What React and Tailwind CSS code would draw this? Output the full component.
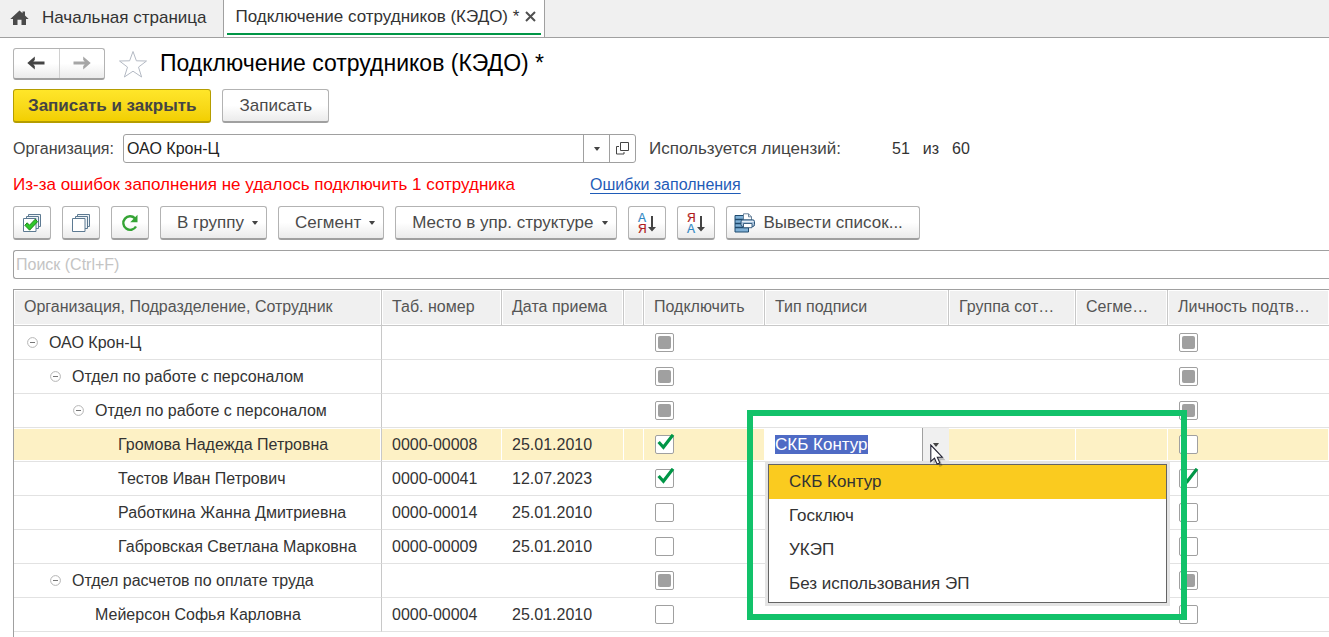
import { useState } from "react";

const COLUMNS = [
  { id: "name", title: "Организация, Подразделение, Сотрудник", width: "w-[368px]" },
  { id: "number", title: "Таб. номер", width: "w-[120px]" },
  { id: "date", title: "Дата приема", width: "w-[122px]" },
  { id: "mark", title: "", width: "w-[20px]" },
  { id: "connect", title: "Подключить", width: "w-[121px]" },
  { id: "sign", title: "Тип подписи", width: "w-[184px]" },
  { id: "group", title: "Группа сот…", width: "w-[127px]" },
  { id: "segment", title: "Сегме…", width: "w-[92px]" },
  { id: "identity", title: "Личность подтв…", width: "w-auto" },
];

const ROWS = [
  { name: "ОАО Крон-Ц", level: 0, group: true, connect: "mixed", identity: "mixed" },
  { name: "Отдел по работе с персоналом", level: 1, group: true, connect: "mixed", identity: "mixed" },
  { name: "Отдел по работе с персоналом", level: 2, group: true, connect: "mixed", identity: "mixed" },
  { name: "Громова Надежда Петровна", level: 3, number: "0000-00008", date: "25.01.2010", connect: "on", identity: "off", selected: true },
  { name: "Тестов Иван Петрович", level: 3, number: "0000-00041", date: "12.07.2023", connect: "on", identity: "on" },
  { name: "Работкина Жанна Дмитриевна", level: 3, number: "0000-00014", date: "25.01.2010", connect: "off", identity: "off" },
  { name: "Габровская Светлана Марковна", level: 3, number: "0000-00009", date: "25.01.2010", connect: "off", identity: "off" },
  { name: "Отдел расчетов по оплате труда", level: 1, group: true, connect: "mixed", identity: "mixed" },
  { name: "Мейерсон Софья Карловна", level: 2, number: "0000-00004", date: "25.01.2010", connect: "off", identity: "off" },
];

const INDENTS = ["pl-[13px]", "pl-[36px]", "pl-[59px]", "pl-[82px]"];

const SIGN_TYPES = ["СКБ Контур", "Госключ", "УКЭП", "Без использования ЭП"];

const BUTTON =
  "flex h-[34px] items-center rounded-[3px] border border-[#b3b3b3] border-b-2 border-b-[#a0a0a0] bg-linear-to-b from-white from-50% to-[#ebebeb] text-[17px] whitespace-nowrap text-[#4a4a4a]";

function HomeIcon() {
  return (
    <svg width="19" height="16" viewBox="0 0 19 16" fill="#4a4a4a" aria-hidden="true">
      <path d="M9.500 .5 12.500 3.300V1.500h2.500v4.100L18.700 9H16v6h-4.500V9.800h-4V15H3V9H.3z" />
    </svg>
  );
}

function ArrowIcon({ className }) {
  return (
    <svg width="18" height="14" viewBox="0 0 18 14" fill="currentColor" className={className} aria-hidden="true">
      <path d="M.3 7 7.800.6V4L6.300 5.500H17.500v3H6.300L7.800 10v3.400z" />
    </svg>
  );
}

function StarIcon() {
  return (
    <svg width="30" height="28" viewBox="0 0 30 28" fill="none" stroke="#b4bac4" aria-hidden="true">
      <path d="M15 1.500 18.400 10.800 28.500 11 20.500 17.100 23.600 27 15 21.200 6.400 27 9.500 17.100 1.500 11 11.600 10.800z" />
    </svg>
  );
}

function Caret() {
  return (
    <svg width="6" height="4" viewBox="0 0 6 4" fill="#444" className="shrink-0" aria-hidden="true">
      <path d="M0 0h6L3.500 3.500h-1z" />
    </svg>
  );
}

function StackIcon({ checked }) {
  return (
    <svg width="20" height="20" viewBox="0 0 20 20" fill="#fff" stroke="#5d7a92" aria-hidden="true">
      <path d="M6.500 1.500h12v12h-12z" fill="#eef3f7" />
      <path d="M4.500 3.500h12v12h-12z" fill="#eef3f7" />
      <path d="M1.500 5.500h12.500v13h-12.500z" />
      {checked && (
        <path d="M2.800 12.300 5.200 9.800 7.500 12.200 13.200 6.200 15.600 8.700 7.600 17.200z" fill="#2fc82a" stroke="#147a14" strokeWidth=".9" />
      )}
    </svg>
  );
}

function RefreshIcon() {
  return (
    <svg width="18" height="18" viewBox="0 0 18 18" fill="none" aria-hidden="true">
      <path d="M14 4.300A6.800 6.800 0 1 0 15 12.500" stroke="#35a435" strokeWidth="2.400" />
      <path d="M16.500 .8v7.400H9.200z" fill="#35a435" />
    </svg>
  );
}

function SortIcon({ top, bottom, topColor, bottomColor }) {
  return (
    <svg width="20" height="22" viewBox="0 0 20 22" aria-hidden="true" fontFamily="Liberation Sans, sans-serif" fontSize="12">
      <text x="1" y="10" fill={topColor} stroke={topColor} strokeWidth=".2">{top}</text>
      <text x="1" y="21" fill={bottomColor} stroke={bottomColor} strokeWidth=".2">{bottom}</text>
      <path d="M14 4h2v11h3L15 19.500 11 15h3z" fill="#444" />
    </svg>
  );
}

function PrintListIcon() {
  return (
    <svg width="22" height="20" viewBox="0 0 22 20" className="shrink-0" aria-hidden="true">
      <path d="M1 2.500h13.500v16.500H1z" fill="#7fb0d6" stroke="#1f4a6e" />
      <path d="M1 6.500h13M1 10.500h13M1 14.500h13" stroke="#1f4a6e" strokeWidth="1.300" />
      <path d="M9.500 7V.8h5l3 3V7" fill="#fff" stroke="#5c7892" strokeWidth=".9" />
      <path d="M14.500.8v3h3" fill="none" stroke="#5c7892" strokeWidth=".9" />
      <rect x="7" y="6.800" width="13.500" height="6.700" rx="1.800" fill="#a9c3dc" stroke="#2d5578" />
      <path d="M8 8.500h11.500" stroke="#e6eff7" />
      <path d="M9.500 10.500h8.500v4.200H9.500z" fill="#fff" stroke="#2d5578" strokeWidth=".9" />
    </svg>
  );
}

function OpenIcon() {
  return (
    <svg width="13" height="13" viewBox="0 0 13 13" fill="none" stroke="#444" aria-hidden="true">
      <path d="M4.500.5h8v8h-8z" />
      <path d="M3 4.500h-2.500v7.500h7.500v-2" />
    </svg>
  );
}

function CollapseIcon() {
  return (
    <svg width="11" height="11" viewBox="0 0 11 11" fill="none" aria-hidden="true">
      <circle cx="5.500" cy="5.500" r="4.900" stroke="#b4b4b4" />
      <path d="M3 5.500h5" stroke="#777" />
    </svg>
  );
}

function PointerIcon() {
  return (
    <svg width="18" height="25" viewBox="0 0 18 25" aria-hidden="true">
      <path d="M3.500 3v17l3.500-3 2.500 6 3-1.200-2.300-5.500h5.300z" fill="#000" opacity=".22" />
      <path d="M.8 1v16.500l3.700-3.400 2.600 6 2.700-1.200-2.500-5.700h5z" fill="#fff" stroke="#223" strokeWidth="1.100" />
    </svg>
  );
}

function CheckMark({ state, label }) {
  const [value, setValue] = useState(state);
  return (
    <span className="relative block size-[19px]">
      <input
        type="checkbox"
        aria-label={label}
        checked={value === "on"}
        ref={(node) => {
          if (node) node.indeterminate = value === "mixed";
        }}
        onChange={() => setValue(value === "on" ? "off" : "on")}
        className="block size-full appearance-none rounded-[2px] border border-[#a0a0a0] bg-white"
      />
      {value === "mixed" && <span className="pointer-events-none absolute inset-[3px] rounded-[2px] bg-[#a0a0a0]" />}
      {value === "on" && (
        <svg viewBox="0 0 20 20" className="pointer-events-none absolute -top-px left-0 size-5" fill="none" aria-hidden="true">
          <path d="M3.600 8 8.400 13.300 18 .8" stroke="#009646" strokeWidth="3.200" />
        </svg>
      )}
    </span>
  );
}

function SignEditor() {
  const [value, setValue] = useState(SIGN_TYPES[0]);
  return (
    <div className="relative h-[33px] bg-white text-[17px]">
      <div className="flex h-full">
        <div className="flex grow items-center pl-[10px]">
          <input
            aria-label="Тип подписи"
            value={value}
            onChange={(e) => setValue(e.target.value)}
            className="field-sizing-content h-[19px] bg-[#4f6bc5] text-white outline-none"
          />
        </div>
        <button type="button" aria-label="Выбрать тип подписи" className="flex w-[27px] items-center justify-center border-l border-[#a0a0a0] bg-[#f0f0f0]">
          <Caret />
        </button>
      </div>
      <ul role="listbox" aria-label="Тип подписи" className="absolute top-[36px] left-[3px] z-10 w-[399px] border border-[#646464] bg-white pb-px shadow-[0_0_0_3px_#e4e4e4]">
        {SIGN_TYPES.map((type) => (
          <li
            key={type}
            role="option"
            aria-selected={type === value}
            onClick={() => setValue(type)}
            className={`flex h-[34px] items-center pl-5 ${type === value ? "bg-[#facb1f]" : ""}`}
          >
            {type}
          </li>
        ))}
      </ul>
      <div className="pointer-events-none absolute -top-[18px] -left-[18px] z-20 h-[210px] w-[440px] border-6 border-[#12c26a]" />
      <div className="pointer-events-none absolute top-4 left-[165px] z-30">
        <PointerIcon />
      </div>
    </div>
  );
}

function Row({ row }) {
  const cell = `h-[34px] border-b border-[#e2e2e2] p-0 ${
    row.selected ? "bg-[#fdf1c5] shadow-[inset_-1px_-1px_0_#fff,inset_0_1px_0_#fff]" : ""
  }`;
  return (
    <tr>
      <td className={`${cell} border-r border-r-[#c8c8c8]`}>
        <div className={`flex items-center ${INDENTS[row.level]}`}>
          <span className="flex w-[22px] items-center">
            {row.group && (
              <button type="button" aria-label={`Свернуть ${row.name}`}>
                <CollapseIcon />
              </button>
            )}
          </span>
          <span className="whitespace-nowrap">{row.name}</span>
        </div>
      </td>
      <td className={`${cell} pl-[10px]`}>{row.number}</td>
      <td className={`${cell} pl-[10px]`}>{row.date}</td>
      <td className={cell} />
      <td className={`${cell} pl-[11px]`}>
        <CheckMark state={row.connect} label={`Подключить: ${row.name}`} />
      </td>
      <td className={cell}>{row.selected && <SignEditor />}</td>
      <td className={cell} />
      <td className={cell} />
      <td className={`${cell} pl-[11px]`}>
        <CheckMark state={row.identity} label={`Личность подтверждена: ${row.name}`} />
      </td>
    </tr>
  );
}

function MenuButton({ children }) {
  return (
    <button type="button" className={`${BUTTON} gap-2 pr-2 pl-4`}>
      {children}
      <Caret />
    </button>
  );
}

function IconButton({ label, children }) {
  return (
    <button type="button" aria-label={label} className={`${BUTTON} w-[38px] justify-center`}>
      {children}
    </button>
  );
}

export default function App() {
  return (
    <div className="min-h-screen overflow-x-hidden bg-white font-['Liberation_Sans',Arial,sans-serif] text-[16px] leading-5 text-[#333]">
      <nav className="flex h-[38px] border-b border-[#a0a0a0] bg-[#f0f0f0] text-[17px] whitespace-nowrap">
        <a href="#home" className="flex items-center gap-[13px] pr-4 pb-[2px] pl-[10px]">
          <HomeIcon />
          Начальная страница
        </a>
        <div className="flex flex-col border-x border-[#a0a0a0] bg-white px-[3px] pb-[2px]">
          <div className="flex grow items-center gap-[6px] border-b-2 border-[#009646] pr-[5px] pl-[9px]">
            <a href="#connect">Подключение сотрудников (КЭДО) *</a>
            <button type="button" aria-label="Закрыть вкладку">
              <svg width="11" height="11" viewBox="0 0 11 11" stroke="#505050" strokeWidth="2" aria-hidden="true">
                <path d="M1 1 10 10M10 1 1 10" />
              </svg>
            </button>
          </div>
        </div>
      </nav>

      <main className="pl-[13px]">
        <header className="flex h-[51px] items-center">
          <div className="flex h-8 w-[92px] rounded-[3px] border border-b-2 border-[#b3b3b3] border-b-[#a0a0a0] bg-linear-to-b from-white from-50% to-[#ebebeb]">
            <button type="button" aria-label="Назад" className="flex flex-1 items-center justify-center border-r border-[#d0d0d0] text-[#444]">
              <ArrowIcon />
            </button>
            <button type="button" aria-label="Вперед" className="flex flex-1 items-center justify-center text-[#a6a6a6]">
              <ArrowIcon className="rotate-180" />
            </button>
          </div>
          <button type="button" aria-label="Добавить в избранное" className="ml-[13px]">
            <StarIcon />
          </button>
          <h1 className="ml-3 pb-[2px] text-[23px] leading-7 text-black">Подключение сотрудников (КЭДО) *</h1>
        </header>

        <div className="flex gap-[11px]">
          <button
            type="button"
            className="h-[34px] rounded-[3px] border border-b-2 border-[#b59d00] bg-linear-to-b from-[#ffe629] to-[#f2cf00] px-[14px] text-[17px] font-bold text-[#444]"
          >
            Записать и закрыть
          </button>
          <button type="button" className={`${BUTTON} px-4`}>
            Записать
          </button>
        </div>

        <div className="mt-[11px] flex h-[29px] items-center text-[#444]">
          <label htmlFor="organization" className="w-[110px]">
            Организация:
          </label>
          <div className="flex h-full w-[513px] rounded-[3px] border border-[#a0a0a0]">
            <input id="organization" defaultValue="ОАО Крон-Ц" className="min-w-0 grow px-[3px] text-[#222] outline-none" />
            <button type="button" aria-label="Выбрать организацию" className="flex w-[26px] items-center justify-center border-l border-[#a0a0a0]">
              <Caret />
            </button>
            <button type="button" aria-label="Открыть организацию" className="flex w-[26px] items-center justify-center border-l border-[#a0a0a0]">
              <OpenIcon />
            </button>
          </div>
          <span className="ml-[13px] w-[243px] text-[17px]">Используется лицензий:</span>
          <span className="flex gap-[13px] text-[#333]">
            <span>51</span>
            <span>из</span>
            <span>60</span>
          </span>
        </div>

        <div className="mt-3 flex">
          <p className="w-[577px] text-[17px] text-[#ff0000]">Из-за ошибок заполнения не удалось подключить 1 сотрудника</p>
          <a href="#errors" className="text-[#1f5cb8] underline underline-offset-3">
            Ошибки заполнения
          </a>
        </div>

        <div className="mt-[11px] flex gap-[11px]">
          <IconButton label="Отметить все">
            <StackIcon checked />
          </IconButton>
          <IconButton label="Снять отметки">
            <StackIcon />
          </IconButton>
          <IconButton label="Обновить">
            <RefreshIcon />
          </IconButton>
          <MenuButton>В группу</MenuButton>
          <MenuButton>Сегмент</MenuButton>
          <MenuButton>Место в упр. структуре</MenuButton>
          <IconButton label="Сортировать по возрастанию">
            <SortIcon top="А" bottom="Я" topColor="#2f87c4" bottomColor="#b01c1c" />
          </IconButton>
          <IconButton label="Сортировать по убыванию">
            <SortIcon top="Я" bottom="А" topColor="#b01c1c" bottomColor="#2f87c4" />
          </IconButton>
          <button type="button" className={`${BUTTON} gap-2 pr-4 pl-[7px]`}>
            <PrintListIcon />
            Вывести список...
          </button>
        </div>

        <input
          type="search"
          aria-label="Поиск"
          placeholder="Поиск (Ctrl+F)"
          className="mt-[10px] block h-[29px] w-full rounded-l-[3px] border border-r-0 border-[#a0a0a0] px-[2px] outline-none placeholder:text-[#c4c4c4]"
        />

        <div className="mt-[10px] border-t border-l border-[#a0a0a0] pb-[5px]">
          <table className="w-full table-fixed border-separate border-spacing-0">
            <thead>
              <tr>
                {COLUMNS.map((column, i) => (
                  <th
                    key={column.id}
                    className={`${column.width} h-9 border-b border-[#c8c8c8] bg-[#f0f0f0] p-0 pb-[2px] pl-[10px] text-left font-normal whitespace-nowrap text-[#555] shadow-[inset_0_0_0_1px_#fff] ${
                      i < COLUMNS.length - 1 ? "border-r" : ""
                    }`}
                  >
                    {column.title}
                  </th>
                ))}
              </tr>
            </thead>
            <tbody>
              {ROWS.map((row, i) => (
                <Row key={i} row={row} />
              ))}
            </tbody>
          </table>
        </div>
      </main>
    </div>
  );
}
